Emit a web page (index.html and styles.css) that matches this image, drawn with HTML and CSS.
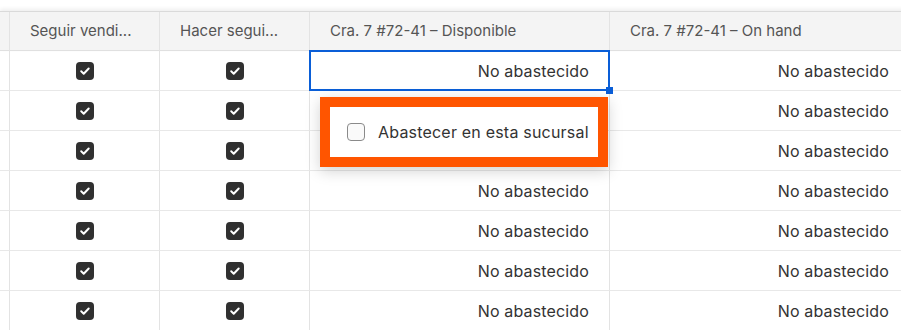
FILE: index.html
```html
<!DOCTYPE html>
<html lang="es">
<head>
  <meta charset="UTF-8" />
  <meta name="viewport" content="width=device-width, initial-scale=1.0"/>
  <title>Inventario por sucursal</title>
  <link rel="stylesheet" href="styles.css">
</head>
<body>
  <div class="sheet">
    <!-- Encabezado -->
    <div class="row head">
      <div class="cell gutter"></div>
      <div class="cell" title="Seguir vendiendo sin existencias">Seguir vendi...</div>
      <div class="cell" title="Hacer seguimiento de inventario">Hacer segui...</div>
      <div class="cell">Cra. 7 #72-41 – Disponible</div>
      <div class="cell">Cra. 7 #72-41 – On hand</div>
    </div>

    <div class="row">
      <div class="cell gutter"></div>
      <div class="cell check"><span class="box on"></span></div>
      <div class="cell check"><span class="box on"></span></div>
      <div class="cell num selected">
        No abastecido
        <span class="handle"></span>
        <div class="popup">
          <label class="option"><span class="box"></span>Abastecer en esta sucursal</label>
        </div>
      </div>
      <div class="cell num">No abastecido</div>
    </div>
    <div class="row">
      <div class="cell gutter"></div>
      <div class="cell check"><span class="box on"></span></div>
      <div class="cell check"><span class="box on"></span></div>
      <div class="cell num">No abastecido</div>
      <div class="cell num">No abastecido</div>
    </div>
    <div class="row">
      <div class="cell gutter"></div>
      <div class="cell check"><span class="box on"></span></div>
      <div class="cell check"><span class="box on"></span></div>
      <div class="cell num">No abastecido</div>
      <div class="cell num">No abastecido</div>
    </div>
    <div class="row">
      <div class="cell gutter"></div>
      <div class="cell check"><span class="box on"></span></div>
      <div class="cell check"><span class="box on"></span></div>
      <div class="cell num">No abastecido</div>
      <div class="cell num">No abastecido</div>
    </div>
    <div class="row">
      <div class="cell gutter"></div>
      <div class="cell check"><span class="box on"></span></div>
      <div class="cell check"><span class="box on"></span></div>
      <div class="cell num">No abastecido</div>
      <div class="cell num">No abastecido</div>
    </div>
    <div class="row">
      <div class="cell gutter"></div>
      <div class="cell check"><span class="box on"></span></div>
      <div class="cell check"><span class="box on"></span></div>
      <div class="cell num">No abastecido</div>
      <div class="cell num">No abastecido</div>
    </div>
    <div class="row">
      <div class="cell gutter"></div>
      <div class="cell check"><span class="box on"></span></div>
      <div class="cell check"><span class="box on"></span></div>
      <div class="cell num">No abastecido</div>
      <div class="cell num">No abastecido</div>
    </div>
  </div>
</body>
</html>
```

FILE: styles.css
```css
body {
  margin: 0;
  font-family: 'Inter', 'Noto Sans', sans-serif;
  background: #fff;
  color: #333;
  overflow: hidden;
}

.sheet {
  padding-top: 11px;
  width: 910px;
}

.row {
  display: grid;
  grid-template-columns: 10px 150px 150px 300px 300px;
  height: 40px;
}

.cell {
  box-sizing: border-box;
  border-right: 1px solid #e3e3e3;
  border-bottom: 1px solid #e8e8e8;
  display: flex;
  align-items: center;
  font-size: 16px;
  letter-spacing: 0.15px;
  position: relative;
}

.head {
  background: #f4f4f4;
  border-top: 1px solid #dadada;
  box-shadow: 0 -2px 4px rgba(0, 0, 0, 0.07);
  height: 40px;
  box-sizing: border-box;
}

.head .cell {
  font-size: 15px;
  letter-spacing: 0;
  color: #555;
  padding: 0 20px;
  border-bottom: 1px solid #e0e0e0;
  display: block;
  line-height: 38px;
  white-space: nowrap;
  overflow: hidden;
}

.head .gutter {
  padding: 0;
}

.check {
  justify-content: center;
}

.num {
  justify-content: flex-end;
  padding-right: 20px;
}

.box {
  width: 18px;
  height: 18px;
  box-sizing: border-box;
  border-radius: 4px;
  border: 1.5px solid #8a8a8a;
  background: #fafafa;
  display: inline-block;
  flex-shrink: 0;
}

.box.on {
  border: none;
  background: #303030 url("data:image/svg+xml,%3Csvg xmlns='http://www.w3.org/2000/svg' viewBox='0 0 18 18'%3E%3Cpath d='M5.2 9.3l2.5 2.4 5-5.2' fill='none' stroke='white' stroke-width='2' stroke-linecap='round' stroke-linejoin='round'/%3E%3C/svg%3E") no-repeat center / 18px 18px;
}

/* celda seleccionada */
.selected::after {
  content: '';
  position: absolute;
  top: -1px;
  left: -1px;
  right: -1px;
  bottom: -1px;
  border: 2px solid #0a5ed7;
  pointer-events: none;
}

.handle {
  position: absolute;
  right: -4px;
  bottom: -4px;
  width: 7px;
  height: 7px;
  background: #0a5ed7;
  z-index: 2;
}

.popup {
  position: absolute;
  top: 46px;
  left: 10px;
  width: 288px;
  height: 70px;
  box-sizing: border-box;
  background: #fff;
  border: 10px solid #ff5500;
  box-shadow: 0 4px 14px rgba(0, 0, 0, 0.18);
  display: flex;
  align-items: center;
  padding-left: 17px;
  z-index: 3;
  letter-spacing: 0;
}

.option {
  display: flex;
  align-items: center;
  gap: 13px;
  font-size: 16px;
  letter-spacing: 0.2px;
  color: #333;
}
```
